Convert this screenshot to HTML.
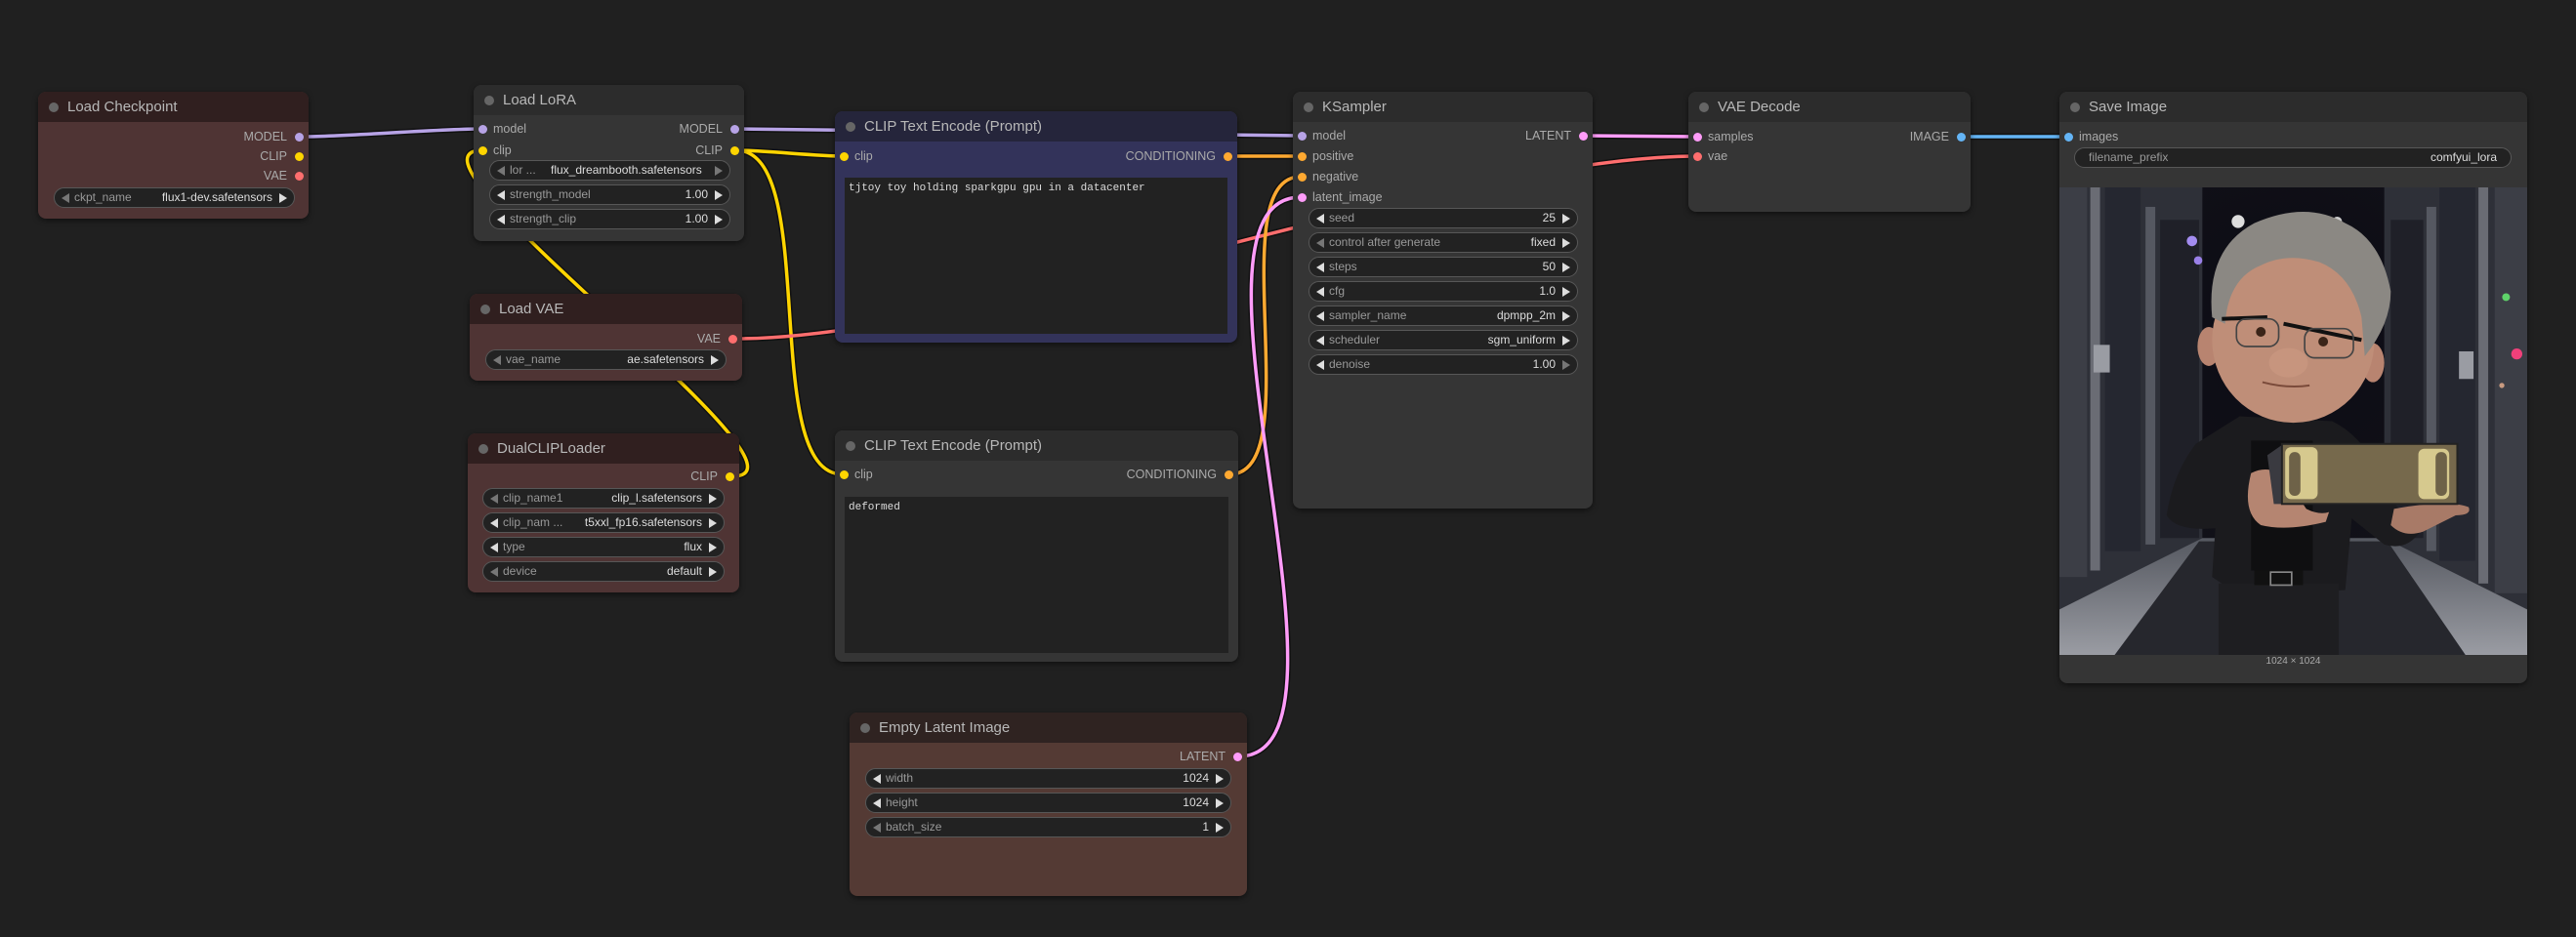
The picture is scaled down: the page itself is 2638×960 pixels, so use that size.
<!DOCTYPE html>
<html><head><meta charset="utf-8">
<style>
*{box-sizing:border-box;margin:0;padding:0}
body{width:2638px;height:960px;background:#202020;overflow:hidden;position:relative;font-family:"Liberation Sans",sans-serif}
.n{position:absolute;border-radius:8px;box-shadow:0 2px 6px rgba(0,0,0,.5);overflow:hidden}
.n .t{position:absolute;left:0;right:0;top:0;height:31px;color:#b8b8b8;font-size:15px;line-height:31px;padding-left:30px}
.n .t:before{content:"";position:absolute;left:11px;top:11px;width:10px;height:10px;border-radius:50%;background:#666}
.g{background:#353535}.g .t{background:#2c2c2c}
.b{background:#4f3434}.b .t{background:#301f1f}
.bl{background:#543a34}.bl .t{background:#2f2321}
.p{background:#33335a}.p .t{background:#25253b}
.s{position:absolute;font-size:12.5px;color:#aaa;line-height:14px}
.d{position:absolute;width:9px;height:9px;border-radius:50%}
.w{position:absolute;height:21px;border-radius:11px;background:#222;border:1px solid #575757;font-size:12px;line-height:19px;color:#999}
.w .l{position:absolute;left:20px}
.w .v{position:absolute;right:22px;color:#ddd}
.w .a,.w .r{position:absolute;top:5px;width:0;height:0;border-top:5px solid transparent;border-bottom:5px solid transparent}
.w .a{left:7px;border-right:8px solid #ddd}
.w .r{right:7px;border-left:8px solid #ddd}
.w .dim{border-right-color:#777}.w .dimr{border-left-color:#777}
.ta{position:absolute;background:#222;font-family:"Liberation Mono",monospace;font-size:11px;color:#ddd;padding:5px 4px}
</style></head><body>

<svg style="position:absolute;left:0;top:0" width="2638" height="960">
<g fill="none" stroke-linecap="round">
<g stroke="#111" stroke-width="6.5">
<path d="M309,140 C355,140 448,132 494,132"/>
<path d="M754,132 C899,132 1187,139 1332,139"/>
<path d="M750,488 C855,488 389,154 494,154"/>
<path d="M754,154 C781,154 836,160 863,160"/>
<path d="M754,154 C841,154 776,486 863,486"/>
<path d="M753,347 C1003,347 1488,160 1738,160"/>
<path d="M1258,160 L1332,160"/>
<path d="M1259,486 C1342,486 1249,181 1332,181"/>
<path d="M1268,775 C1412,775 1188,202 1332,202"/>
<path d="M1622,139 C1651,139 1709,140 1738,140"/>
<path d="M2009,140 L2117,140"/>
</g>
<path stroke="#b7a3e6" stroke-width="3.5" d="M309,140 C355,140 448,132 494,132"/>
<path stroke="#b7a3e6" stroke-width="3.5" d="M754,132 C899,132 1187,139 1332,139"/>
<path stroke="#ffd500" stroke-width="3.5" d="M750,488 C855,488 389,154 494,154"/>
<path stroke="#ffd500" stroke-width="3.5" d="M754,154 C781,154 836,160 863,160"/>
<path stroke="#ffd500" stroke-width="3.5" d="M754,154 C841,154 776,486 863,486"/>
<path stroke="#ff6e6e" stroke-width="3.5" d="M753,347 C1003,347 1488,160 1738,160"/>
<path stroke="#ffa931" stroke-width="3.5" d="M1258,160 L1332,160"/>
<path stroke="#ffa931" stroke-width="3.5" d="M1259,486 C1342,486 1249,181 1332,181"/>
<path stroke="#ff9cf9" stroke-width="3.5" d="M1268,775 C1412,775 1188,202 1332,202"/>
<path stroke="#ff9cf9" stroke-width="3.5" d="M1622,139 C1651,139 1709,140 1738,140"/>
<path stroke="#64b5f6" stroke-width="3.5" d="M2009,140 L2117,140"/>
</g></svg>

<!-- Load Checkpoint -->
<div class="n b" style="left:39px;top:94px;width:277px;height:130px"><div class="t">Load Checkpoint</div>
<div class="s" style="right:22px;top:39px">MODEL</div><div class="d" style="right:5px;top:42px;background:#b7a3e6"></div>
<div class="s" style="right:22px;top:59px">CLIP</div><div class="d" style="right:5px;top:62px;background:#ffd500"></div>
<div class="s" style="right:22px;top:79px">VAE</div><div class="d" style="right:5px;top:82px;background:#ff6e6e"></div>
<div class="w" style="left:16px;top:98px;width:247px"><span class="a dim"></span><span class="l">ckpt_name</span><span class="v">flux1-dev.safetensors</span><span class="r"></span></div>
</div>

<!-- Load LoRA -->
<div class="n g" style="left:485px;top:87px;width:277px;height:160px"><div class="t">Load LoRA</div>
<div class="d" style="left:5px;top:41px;background:#b7a3e6"></div><div class="s" style="left:20px;top:38px">model</div>
<div class="d" style="left:5px;top:63px;background:#ffd500"></div><div class="s" style="left:20px;top:60px">clip</div>
<div class="s" style="right:22px;top:38px">MODEL</div><div class="d" style="right:5px;top:41px;background:#b7a3e6"></div>
<div class="s" style="right:22px;top:60px">CLIP</div><div class="d" style="right:5px;top:63px;background:#ffd500"></div>
<div class="w" style="left:16px;top:77px;width:247px"><span class="a dim"></span><span class="l">lor ...</span><span class="v" style="right:auto;left:62px">flux_dreambooth.safetensors</span><span class="r dimr"></span></div>
<div class="w" style="left:16px;top:102px;width:247px"><span class="a"></span><span class="l">strength_model</span><span class="v">1.00</span><span class="r"></span></div>
<div class="w" style="left:16px;top:127px;width:247px"><span class="a"></span><span class="l">strength_clip</span><span class="v">1.00</span><span class="r"></span></div>
</div>

<!-- Load VAE -->
<div class="n b" style="left:481px;top:301px;width:279px;height:89px"><div class="t">Load VAE</div>
<div class="s" style="right:22px;top:39px">VAE</div><div class="d" style="right:5px;top:42px;background:#ff6e6e"></div>
<div class="w" style="left:16px;top:57px;width:247px"><span class="a dim"></span><span class="l">vae_name</span><span class="v">ae.safetensors</span><span class="r"></span></div>
</div>

<!-- DualCLIPLoader -->
<div class="n b" style="left:479px;top:444px;width:278px;height:163px"><div class="t">DualCLIPLoader</div>
<div class="s" style="right:22px;top:37px">CLIP</div><div class="d" style="right:5px;top:40px;background:#ffd500"></div>
<div class="w" style="left:15px;top:56px;width:248px"><span class="a dim"></span><span class="l">clip_name1</span><span class="v">clip_l.safetensors</span><span class="r"></span></div>
<div class="w" style="left:15px;top:81px;width:248px"><span class="a"></span><span class="l">clip_nam ...</span><span class="v">t5xxl_fp16.safetensors</span><span class="r"></span></div>
<div class="w" style="left:15px;top:106px;width:248px"><span class="a"></span><span class="l">type</span><span class="v">flux</span><span class="r"></span></div>
<div class="w" style="left:15px;top:131px;width:248px"><span class="a dim"></span><span class="l">device</span><span class="v">default</span><span class="r"></span></div>
</div>

<!-- CLIP Text Encode 1 -->
<div class="n p" style="left:855px;top:114px;width:412px;height:237px"><div class="t">CLIP Text Encode (Prompt)</div>
<div class="d" style="left:5px;top:42px;background:#ffd500"></div><div class="s" style="left:20px;top:39px">clip</div>
<div class="s" style="right:22px;top:39px">CONDITIONING</div><div class="d" style="right:5px;top:42px;background:#ffa931"></div>
<div class="ta" style="left:10px;top:68px;width:392px;height:160px">tjtoy toy holding sparkgpu gpu in a datacenter</div>
</div>

<!-- CLIP Text Encode 2 -->
<div class="n g" style="left:855px;top:441px;width:413px;height:237px"><div class="t">CLIP Text Encode (Prompt)</div>
<div class="d" style="left:5px;top:41px;background:#ffd500"></div><div class="s" style="left:20px;top:38px">clip</div>
<div class="s" style="right:22px;top:38px">CONDITIONING</div><div class="d" style="right:5px;top:41px;background:#ffa931"></div>
<div class="ta" style="left:10px;top:68px;width:393px;height:160px">deformed</div>
</div>

<!-- Empty Latent -->
<div class="n bl" style="left:870px;top:730px;width:407px;height:188px"><div class="t">Empty Latent Image</div>
<div class="s" style="right:22px;top:38px">LATENT</div><div class="d" style="right:5px;top:41px;background:#ff9cf9"></div>
<div class="w" style="left:16px;top:57px;width:375px"><span class="a"></span><span class="l">width</span><span class="v">1024</span><span class="r"></span></div>
<div class="w" style="left:16px;top:82px;width:375px"><span class="a"></span><span class="l">height</span><span class="v">1024</span><span class="r"></span></div>
<div class="w" style="left:16px;top:107px;width:375px"><span class="a dim"></span><span class="l">batch_size</span><span class="v">1</span><span class="r"></span></div>
</div>

<!-- KSampler -->
<div class="n g" style="left:1324px;top:94px;width:307px;height:427px"><div class="t">KSampler</div>
<div class="d" style="left:5px;top:41px;background:#b7a3e6"></div><div class="s" style="left:20px;top:38px">model</div>
<div class="d" style="left:5px;top:62px;background:#ffa931"></div><div class="s" style="left:20px;top:59px">positive</div>
<div class="d" style="left:5px;top:83px;background:#ffa931"></div><div class="s" style="left:20px;top:80px">negative</div>
<div class="d" style="left:5px;top:104px;background:#ff9cf9"></div><div class="s" style="left:20px;top:101px">latent_image</div>
<div class="s" style="right:22px;top:38px">LATENT</div><div class="d" style="right:5px;top:41px;background:#ff9cf9"></div>
<div class="w" style="left:16px;top:119px;width:276px"><span class="a"></span><span class="l">seed</span><span class="v">25</span><span class="r"></span></div>
<div class="w" style="left:16px;top:144px;width:276px"><span class="a dim"></span><span class="l">control after generate</span><span class="v">fixed</span><span class="r"></span></div>
<div class="w" style="left:16px;top:169px;width:276px"><span class="a"></span><span class="l">steps</span><span class="v">50</span><span class="r"></span></div>
<div class="w" style="left:16px;top:194px;width:276px"><span class="a"></span><span class="l">cfg</span><span class="v">1.0</span><span class="r"></span></div>
<div class="w" style="left:16px;top:219px;width:276px"><span class="a"></span><span class="l">sampler_name</span><span class="v">dpmpp_2m</span><span class="r"></span></div>
<div class="w" style="left:16px;top:244px;width:276px"><span class="a"></span><span class="l">scheduler</span><span class="v">sgm_uniform</span><span class="r"></span></div>
<div class="w" style="left:16px;top:269px;width:276px"><span class="a"></span><span class="l">denoise</span><span class="v">1.00</span><span class="r dimr"></span></div>
</div>

<!-- VAE Decode -->
<div class="n g" style="left:1729px;top:94px;width:289px;height:123px"><div class="t">VAE Decode</div>
<div class="d" style="left:5px;top:42px;background:#ff9cf9"></div><div class="s" style="left:20px;top:39px">samples</div>
<div class="d" style="left:5px;top:62px;background:#ff6e6e"></div><div class="s" style="left:20px;top:59px">vae</div>
<div class="s" style="right:22px;top:39px">IMAGE</div><div class="d" style="right:5px;top:42px;background:#64b5f6"></div>
</div>

<!-- Save Image -->
<div class="n g" style="left:2109px;top:94px;width:479px;height:606px"><div class="t">Save Image</div>
<div class="d" style="left:5px;top:42px;background:#64b5f6"></div><div class="s" style="left:20px;top:39px">images</div>
<div class="w" style="left:15px;top:57px;width:448px"><span class="l" style="left:14px">filename_prefix</span><span class="v" style="right:14px">comfyui_lora</span></div>
<svg style="position:absolute;left:0;top:98px" width="479" height="479" viewBox="0 0 1440 1440">
<defs>
<radialGradient id="bgc" cx="50%" cy="30%" r="50%"><stop offset="0" stop-color="#0c0b14"/><stop offset="1" stop-color="#111118"/></radialGradient>
<linearGradient id="fl" x1="0" y1="0" x2="0" y2="1"><stop offset="0" stop-color="#555860"/><stop offset="1" stop-color="#9a9ca3"/></linearGradient>
</defs>
<rect width="1440" height="1440" fill="url(#bgc)"/>
<polygon points="0,0 440,0 440,1080 0,1300" fill="#2e3038"/>
<polygon points="1000,0 1440,0 1440,1300 1000,1080" fill="#2e3038"/>
<rect x="0" y="0" width="85" height="1200" fill="#3c3e46"/>
<rect x="95" y="0" width="30" height="1180" fill="#6a6c74"/>
<rect x="140" y="0" width="110" height="1120" fill="#252730"/>
<rect x="265" y="60" width="30" height="1040" fill="#555861"/>
<rect x="310" y="100" width="120" height="980" fill="#1f2028"/>
<rect x="1340" y="0" width="100" height="1250" fill="#3c3e46"/>
<rect x="1290" y="0" width="30" height="1220" fill="#6a6c74"/>
<rect x="1170" y="0" width="110" height="1150" fill="#252730"/>
<rect x="1130" y="60" width="30" height="1060" fill="#555861"/>
<rect x="1020" y="100" width="100" height="980" fill="#1f2028"/>
<rect x="105" y="485" width="50" height="85" fill="#9a9ca3"/>
<rect x="1230" y="505" width="45" height="85" fill="#9a9ca3"/>
<polygon points="0,1300 440,1080 1000,1080 1440,1300 1440,1440 0,1440" fill="url(#fl)"/>
<polygon points="430,1090 1010,1090 1250,1440 170,1440" fill="#26272d"/>
<circle cx="550" cy="105" r="20" fill="#ddd"/><circle cx="855" cy="105" r="15" fill="#ccc"/>
<circle cx="408" cy="165" r="16" fill="#a38cf0"/><circle cx="427" cy="225" r="13" fill="#9a80e8"/>
<circle cx="1375" cy="338" r="12" fill="#5fd36a"/><circle cx="1408" cy="513" r="17" fill="#f0407a"/>
<circle cx="1362" cy="610" r="8" fill="#c89a80"/>
<path d="M555,705 L840,720 Q960,780 1010,950 L1110,1060 Q1070,1120 1000,1100 L900,1020 L880,1240 L560,1260 L470,1200 L480,1050 Q360,1060 330,1010 Q350,880 420,790 Z" fill="#1b1b1e"/>
<rect x="590" y="780" width="190" height="400" fill="#0f0f11"/>
<rect x="490" y="1220" width="370" height="220" fill="#1e1e21"/>
<rect x="600" y="1180" width="150" height="45" fill="#111"/><rect x="650" y="1185" width="65" height="40" fill="none" stroke="#888" stroke-width="5"/>
<path d="M590,880 Q650,850 700,900 L760,990 Q800,1010 830,1000 L820,1030 Q700,1060 620,1040 Q560,1000 590,880 Z" fill="#b58571"/>
<path d="M1030,990 Q1200,960 1260,985 Q1270,1010 1220,1010 L1120,1060 Q1060,1080 1020,1040 Z" fill="#a87a67"/>
<polygon points="640,825 690,790 690,975 660,975" fill="#3a3a40"/>
<rect x="685" y="790" width="540" height="185" fill="#76694c"/>
<rect x="685" y="790" width="540" height="185" fill="none" stroke="#222" stroke-width="6"/>
<rect x="695" y="800" width="100" height="160" rx="18" fill="#d6c98e"/><rect x="707" y="815" width="35" height="135" rx="17" fill="#6e6248"/>
<rect x="1105" y="805" width="95" height="155" rx="18" fill="#d6c98e"/><rect x="1158" y="815" width="35" height="135" rx="17" fill="#6e6248"/>
<ellipse cx="460" cy="490" rx="35" ry="60" fill="#b88470"/><ellipse cx="965" cy="540" rx="35" ry="60" fill="#b88470"/>
<ellipse cx="720" cy="470" rx="250" ry="255" fill="#bf8e78"/>
<path d="M470,400 Q450,190 600,110 Q760,40 880,110 Q990,160 1020,320 Q1020,420 940,520 L930,400 Q900,270 800,230 Q700,200 620,240 Q520,280 510,420 Z" fill="#8b8883"/>
<path d="M500,405 L640,400 M690,420 L930,470" stroke="#111" stroke-width="12"/>
<rect x="545" y="405" width="130" height="85" rx="30" fill="none" stroke="#444" stroke-width="5"/>
<rect x="755" y="435" width="150" height="90" rx="30" fill="none" stroke="#444" stroke-width="5"/>
<circle cx="620" cy="445" r="15" fill="#3a2418"/><circle cx="812" cy="475" r="15" fill="#3a2418"/>
<ellipse cx="705" cy="540" rx="60" ry="45" fill="#c7957e"/>
<path d="M625,600 Q700,620 770,610" stroke="#7a4a3a" stroke-width="6" fill="none"/>
</svg>
<div style="position:absolute;left:0;right:0;top:578px;text-align:center;font-size:10px;color:#aaa">1024 × 1024</div>
</div>

</body></html>
